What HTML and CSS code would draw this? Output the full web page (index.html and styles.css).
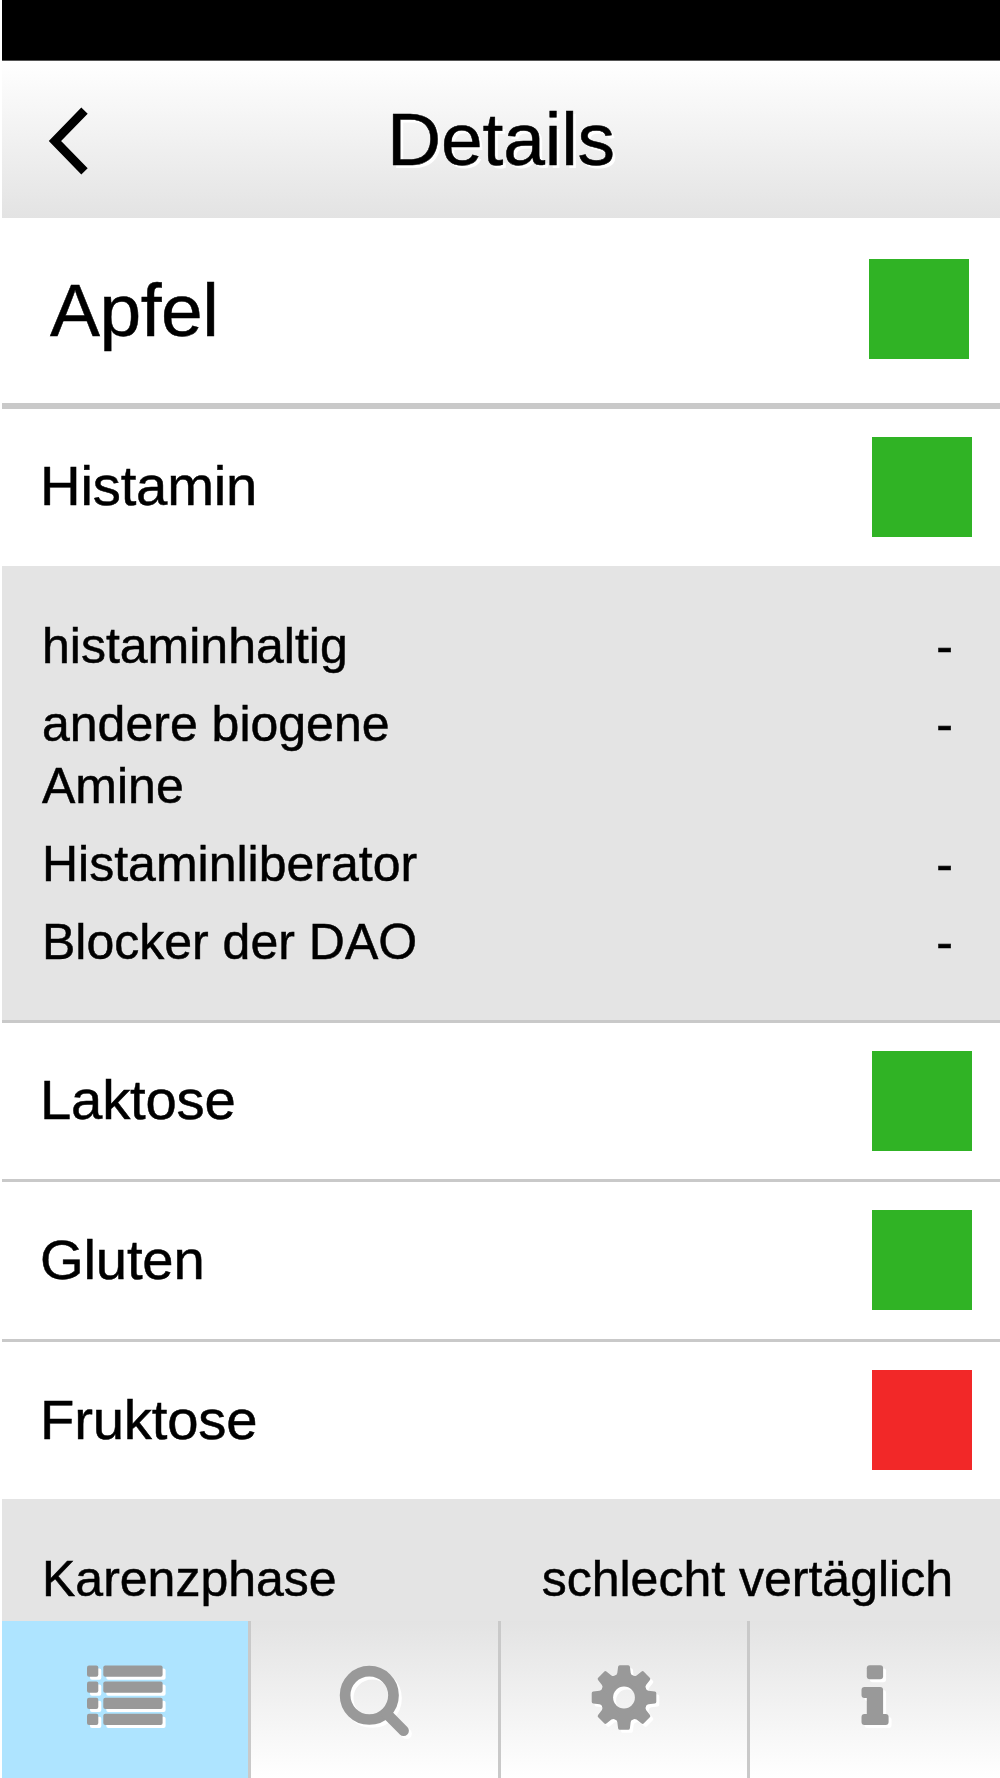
FILE: index.html
```html
<!DOCTYPE html>
<html lang="de">
<head>
<meta charset="utf-8">
<title>Details</title>
<link rel="stylesheet" href="styles.css">
</head>
<body>
<div class="app">
  <div class="statusbar"></div>
  <header class="header">
    <a class="back" href="#" aria-label="Zurück">
      <svg width="44" height="72" viewBox="0 0 44 72"><path d="M38.500 5.700 9 36l29.500 30.300" fill="none" stroke="#000" stroke-width="8.900" stroke-linejoin="miter"/></svg>
    </a>
    <h1 class="title">Details</h1>
  </header>
  <main class="content">
    <section class="food"><h2 class="food-name">Apfel</h2><span class="mark ok"></span></section>
    <section class="row"><span class="label">Histamin</span><span class="mark ok"></span></section>
    <dl class="panel">
      <div class="entry"><dt>histaminhaltig</dt><dd>-</dd></div>
      <div class="entry"><dt>andere biogene Amine</dt><dd>-</dd></div>
      <div class="entry"><dt>Histaminliberator</dt><dd>-</dd></div>
      <div class="entry"><dt>Blocker der DAO</dt><dd>-</dd></div>
    </dl>
    <section class="row divided"><span class="label">Laktose</span><span class="mark ok"></span></section>
    <section class="row divided"><span class="label">Gluten</span><span class="mark ok"></span></section>
    <section class="row divided"><span class="label">Fruktose</span><span class="mark bad"></span></section>
    <dl class="panel">
      <div class="entry"><dt>Karenzphase</dt><dd>schlecht vertäglich</dd></div>
    </dl>
  </main>
  <nav class="tabs">
    <a class="tab active" href="#" aria-label="Liste">
      <svg class="icon" width="80" height="72" viewBox="0 0 80 72">
        <rect x="2" y="4.500" width="11.300" height="11.200" rx="2"/><rect x="18.300" y="4.500" width="59.300" height="11.200" rx="2"/>
        <rect x="2" y="20.600" width="11.300" height="11.200" rx="2"/><rect x="18.300" y="20.600" width="59.300" height="11.200" rx="2"/>
        <rect x="2" y="36.700" width="11.300" height="11.200" rx="2"/><rect x="18.300" y="36.700" width="59.300" height="11.200" rx="2"/>
        <rect x="2" y="52.800" width="11.300" height="11.200" rx="2"/><rect x="18.300" y="52.800" width="59.300" height="11.200" rx="2"/>
      </svg>
    </a>
    <a class="tab" href="#" aria-label="Suche">
      <svg class="icon" width="80" height="76" viewBox="0 0 80 76">
        <circle cx="34.300" cy="34.300" r="24.200" fill="none" stroke="#999" stroke-width="10.700"/>
        <path d="M51 52 68.600 69.700" stroke="#999" stroke-width="10.600" stroke-linecap="round"/>
      </svg>
    </a>
    <a class="tab" href="#" aria-label="Einstellungen">
      <svg class="icon" width="80" height="72" viewBox="0 0 80 72">
        <defs>
          <path id="tooth" d="M-9.500-21.500Q-7-22.500-6.700-24.500L-5.900-30.800Q-5.700-32.300-4.200-32.300H4.200Q5.700-32.300 5.900-30.800L6.700-24.500Q7-22.500 9.500-21.500V-15H-9.500Z"/>
          <mask id="hole" maskUnits="userSpaceOnUse" x="-36" y="-36" width="72" height="72"><rect x="-36" y="-36" width="72" height="72" fill="#fff"/><circle r="10.900" fill="#000"/></mask>
        </defs>
        <g transform="translate(40 36.500)"><g mask="url(#hole)">
          <circle r="23.500"/>
          <use href="#tooth"/><use href="#tooth" transform="rotate(45)"/><use href="#tooth" transform="rotate(90)"/><use href="#tooth" transform="rotate(135)"/>
          <use href="#tooth" transform="rotate(180)"/><use href="#tooth" transform="rotate(225)"/><use href="#tooth" transform="rotate(270)"/><use href="#tooth" transform="rotate(315)"/>
        </g></g>
      </svg>
    </a>
    <a class="tab" href="#" aria-label="Info">
      <svg class="icon" width="80" height="72" viewBox="0 0 80 72">
        <rect x="31.800" y="4.300" width="16.300" height="14" rx="3"/>
        <path d="M29.500 26H45.100a3 3 0 0 1 3 3V53h2.500a3 3 0 0 1 3 3v5a3 3 0 0 1-3 3H29.500a3 3 0 0 1-3-3v-5a3 3 0 0 1 3-3h2.300V37h-2.300a3 3 0 0 1-3-3v-5a3 3 0 0 1 3-3Z"/>
      </svg>
    </a>
  </nav>
</div>
</body>
</html>
```
FILE: styles.css
```css
* { box-sizing: border-box; }
body { margin: 0; background: #fff; color: #000; font-family: "Liberation Sans", Arial, Helvetica, sans-serif; -webkit-text-stroke: 0.5px #000; }
a { color: inherit; text-decoration: none; }
h1, h2, dl, dt, dd { margin: 0; font-weight: normal; }
.app { display: flex; flex-direction: column; height: 1778px; padding-left: 2px; overflow: hidden; }
.statusbar { flex: none; height: 61px; background: #000; border-bottom: 1px solid #555; }
.header { flex: none; display: grid; grid-template-columns: 130px 1fr 130px; align-items: center; height: 156.5px; background: linear-gradient(#fff, #e3e3e3); }
.back { display: block; height: 72px; margin: 4px 0 0 44px; }
.back svg { display: block; }
.title { font-size: 75px; line-height: 94px; letter-spacing: -0.2px; text-align: center; text-shadow: 3px 3px 0 #fff; padding-bottom: 1px; }
.content { flex: 1; min-height: 0; overflow: hidden; }
.food, .row { display: flex; align-items: center; justify-content: space-between; background: #fff; }
.food { height: 191px; padding: 0 31px 3px 48px; border-bottom: 6px solid #c9c9c9; }
.food-name { font-size: 75px; line-height: 94px; letter-spacing: -0.5px; padding-top: 3px; }
.row { height: 157px; padding: 0 28px 1px 38px; }
.divided { height: 159.7px; border-top: 3px solid #c9c9c9; }
.label { font-size: 56.25px; line-height: 70px; letter-spacing: -0.2px; padding-bottom: 1px; }
.mark { width: 100px; height: 100px; }
.ok { background: #30b325; }
.bad { background: #f22828; }
.panel { display: flex; flex-direction: column; gap: 15.6px; padding: 49px 47px 46px 40px; background: #e4e4e4; font-size: 50px; line-height: 62.5px; }
.entry { display: flex; justify-content: space-between; }
.entry dt { max-width: 400px; }
.tabs { flex: none; display: grid; grid-template-columns: 249px 250px 249px 1fr; height: 157px; background: linear-gradient(#e3e3e3, #fff); }
.tab { display: flex; justify-content: center; padding-top: 40px; border-right: 3px solid #c9c9c9; }
.tab:last-child { border-right: 0; }
.active { background: #aee4ff; }
.icon { display: block; overflow: visible; fill: #999; filter: drop-shadow(3px 3px 0 #fff); }
```
